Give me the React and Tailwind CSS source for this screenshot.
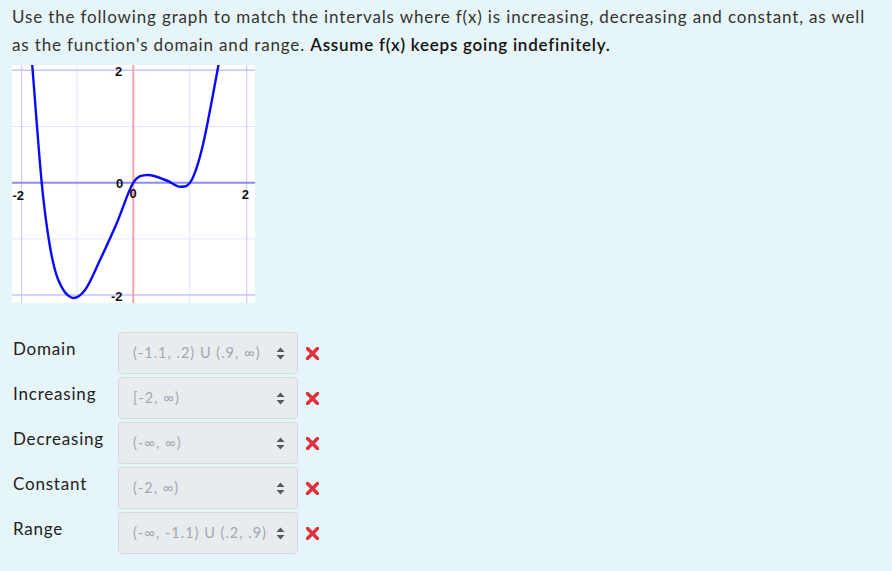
import React from 'react';

const curvePoints = [
  [18.5, -20], [20.3, 1], [29.7, 117.7], [38, 181.7], [46.3, 215], [59.2, 232.5],
  [73, 225], [88, 195], [104.7, 158.3], [121.3, 117.7], [135.5, 110], [154.7, 115.5],
  [168.5, 121.7], [179.7, 115], [191.3, 78.3], [206.3, 1], [210, -20],
];

// catmull-rom through the points read off the screenshot
const toPath = (pts) => {
  let d = `M${pts[0][0]},${pts[0][1]}`;
  for (let i = 0; i < pts.length - 1; i++) {
    const p0 = pts[i - 1] || pts[i];
    const p1 = pts[i];
    const p2 = pts[i + 1];
    const p3 = pts[i + 2] || p2;
    const c1 = [p1[0] + (p2[0] - p0[0]) / 6, p1[1] + (p2[1] - p0[1]) / 6];
    const c2 = [p2[0] - (p3[0] - p1[0]) / 6, p2[1] - (p3[1] - p1[1]) / 6];
    d += ` C${c1[0].toFixed(1)},${c1[1].toFixed(1)} ${c2[0].toFixed(1)},${c2[1].toFixed(1)} ${p2[0]},${p2[1]}`;
  }
  return d;
};

const Graph = () => (
  <div className="w-[243px] h-[238px] bg-white overflow-hidden">
    <svg width="243" height="238" viewBox="0 0 243 238">
      {/* minor grid */}
      <line x1="65" y1="0" x2="65" y2="238" stroke="#e4e4ff" strokeWidth="1" />
      <line x1="177.6" y1="0" x2="177.6" y2="238" stroke="#e4e4ff" strokeWidth="1" />
      <line x1="0" y1="61.5" x2="243" y2="61.5" stroke="#e4e4ff" strokeWidth="1" />
      <line x1="0" y1="173.9" x2="243" y2="173.9" stroke="#e4e4ff" strokeWidth="1" />
      {/* major grid */}
      <line x1="9.7" y1="0" x2="9.7" y2="238" stroke="#c4c4ff" strokeWidth="1" />
      <line x1="234.7" y1="0" x2="234.7" y2="238" stroke="#c4c4ff" strokeWidth="1" />
      <line x1="0" y1="5.3" x2="243" y2="5.3" stroke="#c4c4ff" strokeWidth="1.5" />
      <line x1="0" y1="230.1" x2="243" y2="230.1" stroke="#c4c4ff" strokeWidth="1.5" />
      {/* axes */}
      <line x1="0" y1="117.7" x2="243" y2="117.7" stroke="#8c8cff" strokeWidth="2" />
      <line x1="121.3" y1="0" x2="121.3" y2="238" stroke="#f3a3ab" strokeWidth="2" />
      <path d={toPath(curvePoints)} fill="none" stroke="#0a0aff" strokeWidth="2.4" />
      <g fontFamily="'Liberation Sans', Arial, sans-serif" fontWeight="700" fontSize="13" fill="#111">
        <text x="103" y="11">2</text>
        <text x="0.5" y="134.5">-2</text>
        <text x="104" y="123">0</text>
        <text x="117.5" y="133.3">0</text>
        <text x="229.7" y="134.3">2</text>
        <text x="99" y="235.7">-2</text>
      </g>
    </svg>
  </div>
);

const rows = [
  { label: 'Domain', value: '(-1.1, .2) U (.9, ∞)' },
  { label: 'Increasing', value: '[-2, ∞)' },
  { label: 'Decreasing', value: '(-∞, ∞)' },
  { label: 'Constant', value: '(-2, ∞)' },
  { label: 'Range', value: '(-∞, -1.1) U (.2, .9)' },
];

const Arrows = () => (
  <svg width="9" height="13" viewBox="0 0 9 13" className="shrink-0">
    <path d="M4.5 0.5 L8.5 5 L0.5 5 Z" fill="#555b61" />
    <path d="M4.5 12.5 L8.5 8 L0.5 8 Z" fill="#555b61" />
  </svg>
);

const WrongMark = () => (
  <svg width="13" height="13" viewBox="0 0 13 13">
    <path d="M1.5 1.5 L11.5 11.5 M11.5 1.5 L1.5 11.5" stroke="#e0303c" strokeWidth="3.4" strokeLinecap="square" />
  </svg>
);

export default function App() {
  return (
    <div
      className="min-h-[571px] bg-[#e6f5f7] pl-3 pr-2 pt-[3px] text-[#333]"
      style={{ fontFamily: "Lato, 'Open Sans', sans-serif" }}
    >
      <p className="text-[17px] leading-[28px] tracking-[0.85px] whitespace-nowrap">
        Use the following graph to match the intervals where f(x) is increasing, decreasing and constant, as well
        <br />
        as the function's domain and range.{' '}
        <span className="font-semibold text-[#111] tracking-[0.75px]">Assume f(x) keeps going indefinitely.</span>
      </p>

      <div className="mt-[6px]">
        <Graph />
      </div>

      <div className="mt-[29px] flex flex-col gap-[3px]">
        {rows.map((row) => (
          <div key={row.label} className="flex items-start">
            <div className="w-[106px] pt-[6px] pl-px text-[17px] leading-[22px] tracking-[0.8px] text-[#222]">
              {row.label}
            </div>
            <div className="flex h-[42px] w-[180px] items-center rounded border border-[#d4dadf] bg-[#e9ecef] pl-[14px] pr-[12px]">
              <span className="flex-1 text-[14.5px] tracking-[1px] text-[#a3a8ad] whitespace-nowrap">{row.value}</span>
              <Arrows />
            </div>
            <div className="flex h-[42px] items-center pl-[8px]">
              <WrongMark />
            </div>
          </div>
        ))}
      </div>
    </div>
  );
}
